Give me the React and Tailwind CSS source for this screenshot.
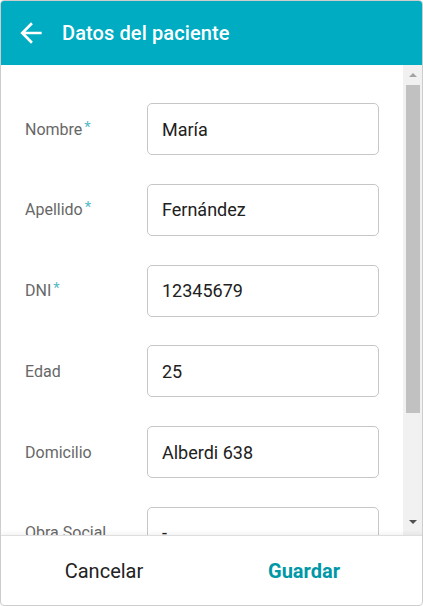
import React from 'react';

const fields = [
    { label: 'Nombre', value: 'María', required: true },
    { label: 'Apellido', value: 'Fernández', required: true },
    { label: 'DNI', value: '12345679', required: true },
    { label: 'Edad', value: '25' },
    { label: 'Domicilio', value: 'Alberdi 638' },
    { label: 'Obra Social', value: '-' },
    { label: 'Teléfono', value: '' },
];

const App = () => {
    return (
        <div className="w-[423px] h-[606px] bg-white" style={{ fontFamily: 'Roboto, "Noto Sans", sans-serif' }}>
            <div className="w-full h-full border border-[#cdcdcd] rounded-[4px] overflow-hidden flex flex-col">
                {/* Header */}
                <div className="h-[64px] shrink-0 bg-[#00acc1] flex items-center text-white">
                    <svg className="ml-[14px] w-[32px] h-[32px]" viewBox="0 0 24 24" fill="currentColor">
                        <path d="M20 11H7.83l5.59-5.59L12 4l-8 8 8 8 1.41-1.41L7.83 13H20v-2z" />
                    </svg>
                    <h1 className="ml-[15px] text-[20px] font-medium tracking-[0.1px]">Datos del paciente</h1>
                </div>

                {/* Form + scrollbar */}
                <div className="flex-1 min-h-0 flex">
                    <div className="flex-1 overflow-hidden">
                        <div className="pt-[38px] pb-[40px] flex flex-col gap-[28.8px]">
                            {fields.map((f) => (
                                <div key={f.label} className="flex items-center pl-[24px]">
                                    <label className="w-[122px] text-[16px] leading-[24px] pt-[1px] text-[#676767]">
                                        {f.label}
                                        {f.required && <span className="text-[#55b9c7] text-[15px] ml-[2px] relative -top-[3px]">*</span>}
                                    </label>
                                    <input
                                        type="text"
                                        defaultValue={f.value}
                                        className="w-[232px] h-[52px] border border-[#c6c6c6] rounded-[5px] px-[14px] text-[18px] text-[#212121] outline-none"
                                    />
                                </div>
                            ))}
                        </div>
                    </div>
                    <div className="w-[19px] shrink-0 bg-[#f1f1f1] flex flex-col items-center">
                        <div className="h-[20px] flex items-center justify-center">
                            <div className="w-0 h-0 border-l-[4px] border-r-[4px] border-b-[4px] border-l-transparent border-r-transparent border-b-[#a3a3a3]" />
                        </div>
                        <div className="w-[14px] h-[328px] bg-[#c1c1c1]" />
                        <div className="flex-1" />
                        <div className="h-[26px] flex items-center justify-center">
                            <div className="w-0 h-0 border-l-[4px] border-r-[4px] border-t-[4px] border-l-transparent border-r-transparent border-t-[#505050]" />
                        </div>
                    </div>
                </div>

                {/* Footer */}
                <div className="h-[70px] shrink-0 border-t border-[#dedede] shadow-[0_-2px_4px_rgba(0,0,0,0.05)] flex items-center pl-[3px]">
                    <button className="w-[200px] text-[20px] text-[#222222]">Cancelar</button>
                    <button className="w-[200px] text-[20px] font-bold text-[#0097a7]">Guardar</button>
                </div>
            </div>
        </div>
    );
};

export default App;
